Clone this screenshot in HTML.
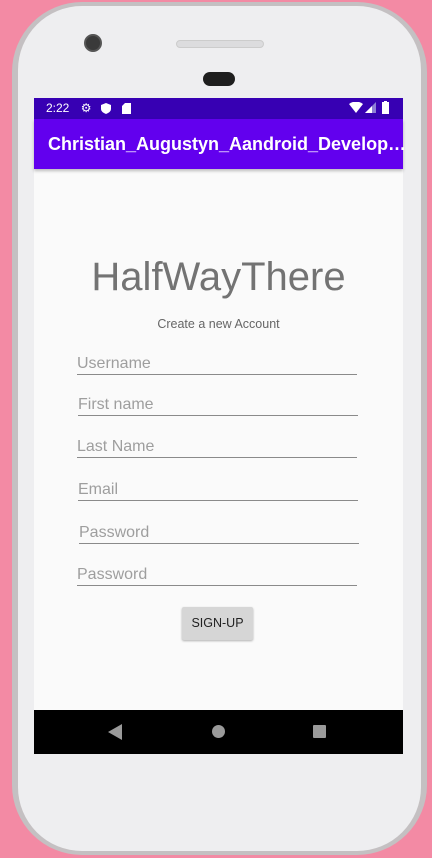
<!DOCTYPE html>
<html><head><style>
*{margin:0;padding:0;box-sizing:border-box}
body{width:432px;height:858px;background:#f38aa4;position:relative;overflow:hidden;font-family:"Liberation Sans",sans-serif}
.phone{position:absolute;left:12px;top:2px;width:415px;height:853px;border-radius:70px;background:#c4c0c2;}
.inner{position:absolute;left:6px;top:4px;width:403px;height:845px;border-radius:64px;background:#eeeef0;}
.cam{position:absolute;left:84px;top:34px;width:18px;height:18px;border-radius:50%;background:#3a3a3a;border:2px solid #555}
.spk{position:absolute;left:176px;top:40px;width:88px;height:8px;border-radius:4px;background:#dcdcde;border:1px solid #ccc}
.ear{position:absolute;left:203px;top:72px;width:32px;height:14px;border-radius:7px;background:#1e1e1e}
.screen{position:absolute;left:34px;top:98px;width:369px;height:656px;background:#fafafa}
.sb{height:21px;background:#3700b3;color:#fff;font-size:12px;line-height:21px;padding-left:12px;position:relative}
.tb{height:50px;background:#6200ee;color:#fff;font-size:18px;font-weight:bold;line-height:50px;padding-left:14px;box-shadow:0 2px 3px rgba(0,0,0,.25);position:relative}
.title{position:absolute;top:157px;left:0;width:369px;text-align:center;font-size:40px;color:#737373}
.sub{position:absolute;top:219px;left:0;width:369px;text-align:center;font-size:12.5px;color:#666}
.f{position:absolute;width:280px;height:22px;border-bottom:1.5px solid #8a8a8a;color:#9e9e9e;font-size:16px;line-height:22px}
.btn{position:absolute;left:148px;top:509px;width:71px;height:33px;background:#d6d6d6;box-shadow:0 1px 2px rgba(0,0,0,.3);border-radius:2px;font-size:12.5px;text-align:center;line-height:33px;color:#222}
.nav{position:absolute;top:612px;left:0;width:369px;height:44px;background:#000}
</style></head><body>
<div class="phone"><div class="inner"></div></div>
<div class="cam"></div><div class="spk"></div><div class="ear"></div>
<div class="screen">
<div class="sb">2:22 <span style="margin-left:8px">⚙</span>
<svg style="position:absolute;left:67px;top:5px" width="10" height="11"><path d="M5 0L10 2V6Q10 9 5 11Q0 9 0 6V2Z" fill="#fff"/></svg>
<svg style="position:absolute;left:88px;top:5px" width="9" height="11"><path d="M3 0H9V11H0V3Z" fill="#fff"/></svg>
<svg style="position:absolute;left:315px;top:4px" width="14" height="11"><path d="M0 2Q7 -3 14 2L7 11Z" fill="#fff"/></svg>
<svg style="position:absolute;left:331px;top:4px" width="11" height="11"><path d="M11 0V11H0Z" fill="#8e7fd6"/><path d="M7 4V11H0Z" fill="#fff"/></svg>
<svg style="position:absolute;left:348px;top:3px" width="7" height="13"><rect x="0" y="1" width="7" height="12" fill="#fff"/><rect x="2" y="0" width="3" height="2" fill="#fff"/></svg>
</div>
<div class="tb">Christian_Augustyn_Aandroid_Develop…</div>
<div class="title">HalfWayThere</div>
<div class="sub">Create a new Account</div>
<div class="f" style="left:43px;top:255px">Username</div>
<div class="f" style="left:44px;top:296px">First name</div>
<div class="f" style="left:43px;top:338px">Last Name</div>
<div class="f" style="left:44px;top:381px">Email</div>
<div class="f" style="left:45px;top:424px">Password</div>
<div class="f" style="left:43px;top:466px">Password</div>
<div class="btn">SIGN-UP</div>
<div class="nav">
<svg style="position:absolute;left:74px;top:14px" width="14" height="16"><path d="M14 0V16L0 8Z" fill="#9a9a9a"/></svg>
<div style="position:absolute;left:178px;top:15px;width:13px;height:13px;border-radius:50%;background:#9a9a9a"></div>
<div style="position:absolute;left:279px;top:15px;width:13px;height:13px;border-radius:1px;background:#9a9a9a"></div>
</div>
</div>
</body></html>
